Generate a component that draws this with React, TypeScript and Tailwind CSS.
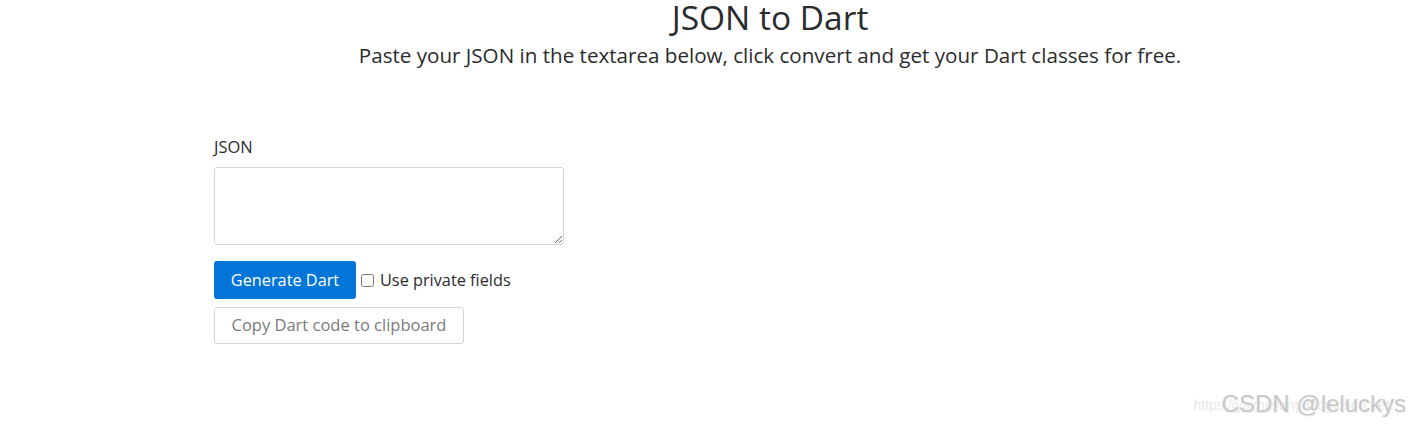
import { useState } from "react";

export default function App() {
  const [json, setJson] = useState("");
  const [privateFields, setPrivateFields] = useState(false);

  return (
    <div className="relative min-h-[428px] bg-white text-[#292b2c] font-['Open_Sans','Noto_Sans',sans-serif]">
      {/* header */}
      <div className="pl-[128px] text-center">
        <h1 className="text-[33.5px] leading-[34px]">JSON to Dart</h1>
        <p className="mt-[6px] text-[20.6px] leading-[30px]">
          Paste your JSON in the textarea below, click convert and get your Dart classes for free.
        </p>
      </div>

      {/* form */}
      <div className="pl-[214px] pt-[65px]">
        <label className="block text-[16.5px] leading-[24px]">JSON</label>
        <textarea
          className="mt-[8px] block w-[350px] h-[78px] border border-[#d5d5d5] rounded-[3px] px-3 py-2 text-[16px] outline-none"
          value={json}
          onChange={(e) => setJson(e.target.value)}
        />

        <div className="mt-[16px] flex items-center">
          <button className="h-[38px] w-[142px] rounded-[3px] bg-[#0275d8] text-white text-[16.3px]">
            Generate Dart
          </button>
          <label className="ml-[5px] flex items-center gap-[6px] text-[16.3px]">
            <input
              type="checkbox"
              className="w-[13px] h-[13px]"
              checked={privateFields}
              onChange={(e) => setPrivateFields(e.target.checked)}
            />
            Use private fields
          </label>
        </div>

        <button className="mt-[8px] h-[37px] w-[250px] rounded-[3px] border border-[#d5d5d5] bg-white text-[#7a7a7a] text-[16.5px]">
          Copy Dart code to clipboard
        </button>
      </div>

      {/* watermark */}
      <div className="absolute right-[6px] bottom-[10px] flex items-end font-['Liberation_Sans',sans-serif]">
        <span className="text-[14px] text-[#e8e8e8] mr-[-168px] mb-[2px]">https://yazhiqiang.blog.csdn.net</span>
        <span className="text-[24px] leading-[28px] text-[#c8c8c8] [text-shadow:1px_1px_1px_#eeeeee]">
          CSDN @leluckys
        </span>
      </div>
    </div>
  );
}
